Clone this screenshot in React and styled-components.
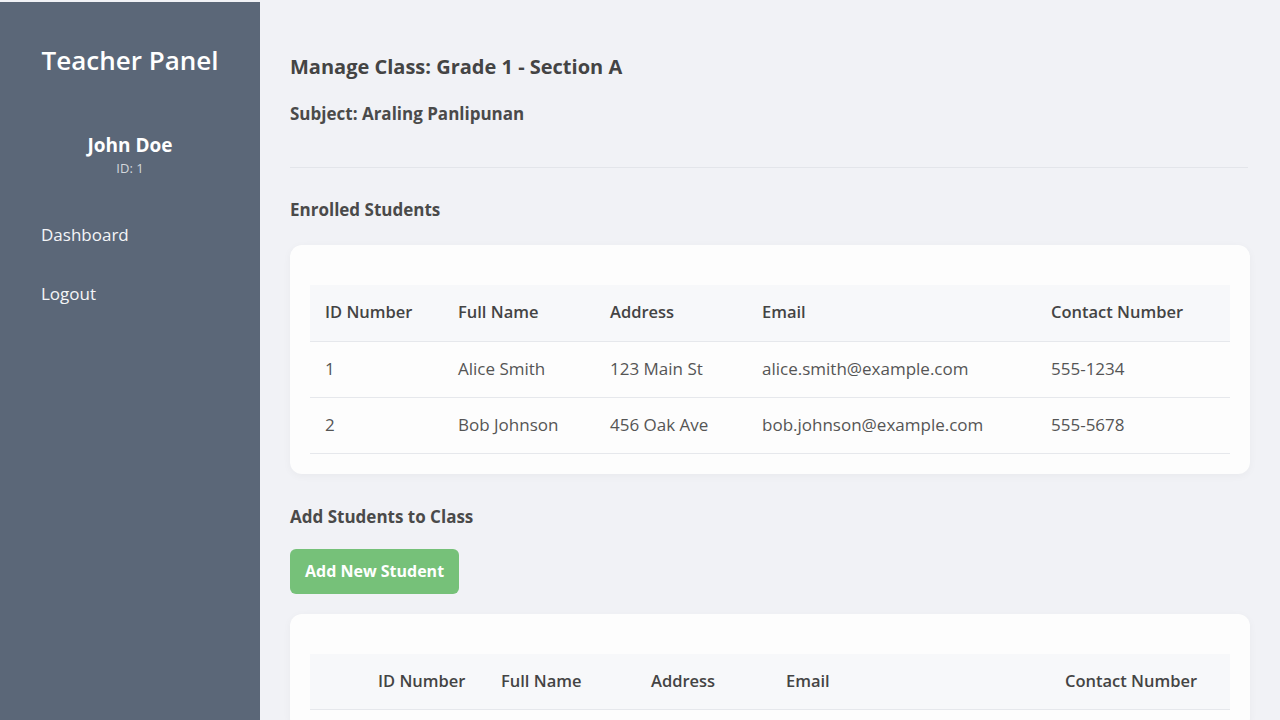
import React from "react"
import styled, { createGlobalStyle } from "styled-components"

const GlobalStyle = createGlobalStyle`
  * { box-sizing: border-box; }
  body {
    margin: 0;
    font-family: "Open Sans", "Noto Sans", sans-serif;
    background: #f1f2f6;
    color: #444;
  }
`

const enrolled = [
  { id: 1, name: "Alice Smith", address: "123 Main St", email: "alice.smith@example.com", contact: "555-1234" },
  { id: 2, name: "Bob Johnson", address: "456 Oak Ave", email: "bob.johnson@example.com", contact: "555-5678" },
]

const App = () => {
  return (
    <Layout>
      <GlobalStyle />
      <Sidebar>
        <Brand>Teacher Panel</Brand>
        <Profile>
          <ProfileName>John Doe</ProfileName>
          <ProfileId>ID: 1</ProfileId>
        </Profile>
        <Nav>
          <NavLink href="#">Dashboard</NavLink>
          <NavLink href="#">Logout</NavLink>
        </Nav>
      </Sidebar>

      <Main>
        <PageTitle>Manage Class: Grade 1 - Section A</PageTitle>
        <SubTitle>Subject: Araling Panlipunan</SubTitle>
        <Divider />

        <SectionTitle $gap={23}>Enrolled Students</SectionTitle>
        <Card>
          <Table>
            <colgroup>
              <col style={{ width: 133 }} />
              <col style={{ width: 152 }} />
              <col style={{ width: 152 }} />
              <col style={{ width: 289 }} />
              <col />
            </colgroup>
            <thead>
              <tr>
                <Th>ID Number</Th>
                <Th>Full Name</Th>
                <Th>Address</Th>
                <Th>Email</Th>
                <Th>Contact Number</Th>
              </tr>
            </thead>
            <tbody>
              {enrolled.map((s) => (
                <tr key={s.id}>
                  <Td>{s.id}</Td>
                  <Td>{s.name}</Td>
                  <Td>{s.address}</Td>
                  <Td>{s.email}</Td>
                  <Td>{s.contact}</Td>
                </tr>
              ))}
            </tbody>
          </Table>
        </Card>

        <SectionTitle $gap={20}>Add Students to Class</SectionTitle>
        <AddButton>Add New Student</AddButton>
        <Card>
          <Table>
            <colgroup>
              <col style={{ width: 53 }} />
              <col style={{ width: 123 }} />
              <col style={{ width: 150 }} />
              <col style={{ width: 135 }} />
              <col style={{ width: 279 }} />
              <col />
            </colgroup>
            <thead>
              <tr>
                <Th></Th>
                <Th>ID Number</Th>
                <Th>Full Name</Th>
                <Th>Address</Th>
                <Th>Email</Th>
                <Th>Contact Number</Th>
              </tr>
            </thead>
          </Table>
        </Card>
      </Main>
    </Layout>
  )
}

export default App

const Layout = styled.div`
  display: flex;
  height: 100vh;
  padding-top: 2px;
  overflow: hidden;
`

const Sidebar = styled.aside`
  flex: 0 0 260px;
  background: #5b6778;
  color: #fff;
  display: flex;
  flex-direction: column;
  padding: 40px 0;
`

const Brand = styled.h1`
  margin: 0;
  text-align: center;
  font-size: 26px;
  font-weight: 600;
  line-height: 36px;
`

const Profile = styled.div`
  margin-top: 54px;
  text-align: center;
`

const ProfileName = styled.div`
  font-size: 19px;
  font-weight: 700;
  line-height: 26px;
`

const ProfileId = styled.div`
  font-size: 13px;
  line-height: 20px;
  color: #d3d7dd;
`

const Nav = styled.nav`
  margin-top: 45px;
  display: flex;
  flex-direction: column;
  gap: 35px;
  padding: 0 41px;
`

const NavLink = styled.a`
  color: #f4f5f7;
  text-decoration: none;
  font-size: 17px;
  line-height: 24px;
`

const Main = styled.main`
  flex: 1;
  padding: 50px 30px 0 30px;
  overflow: hidden;
`

const PageTitle = styled.h2`
  margin: 0;
  font-size: 20px;
  font-weight: 700;
  line-height: 30px;
  color: #444;
`

const SubTitle = styled.h3`
  margin: 20px 0 0;
  font-size: 17px;
  font-weight: 700;
  line-height: 24px;
  color: #4a4a4a;
`

const Divider = styled.hr`
  margin: 41px 0 30px;
  border: none;
  border-top: 1px solid #e3e5ea;
  width: 958px;
`

const SectionTitle = styled.h3`
  margin: 0 0 ${(p) => p.$gap}px;
  font-size: 17px;
  font-weight: 700;
  line-height: 24px;
  color: #4a4a4a;
`

const Card = styled.div`
  background: #fdfdfd;
  border-radius: 12px;
  box-shadow: 0 2px 8px rgba(0, 0, 0, 0.04);
  padding: 40px 20px 20px;
  margin-bottom: 31px;
`

const Table = styled.table`
  width: 100%;
  border-collapse: collapse;
  table-layout: fixed;
`

const Th = styled.th`
  text-align: left;
  background: #f7f8fa;
  height: 56px;
  padding: 0 15px 2px;
  font-size: 16.5px;
  font-weight: 600;
  color: #444;
  border-bottom: 1px solid #e6e8ec;
  white-space: nowrap;
`

const Td = styled.td`
  height: 56px;
  padding: 0 15px 2px;
  font-size: 17px;
  color: #555;
  border-bottom: 1px solid #e6e8ec;
  white-space: nowrap;
`

const AddButton = styled.button`
  display: block;
  margin-bottom: 20px;
  height: 45px;
  padding: 0 15px;
  border: none;
  border-radius: 6px;
  background: #76c179;
  color: #fff;
  font-family: inherit;
  font-size: 16px;
  font-weight: 700;
  cursor: pointer;
`
